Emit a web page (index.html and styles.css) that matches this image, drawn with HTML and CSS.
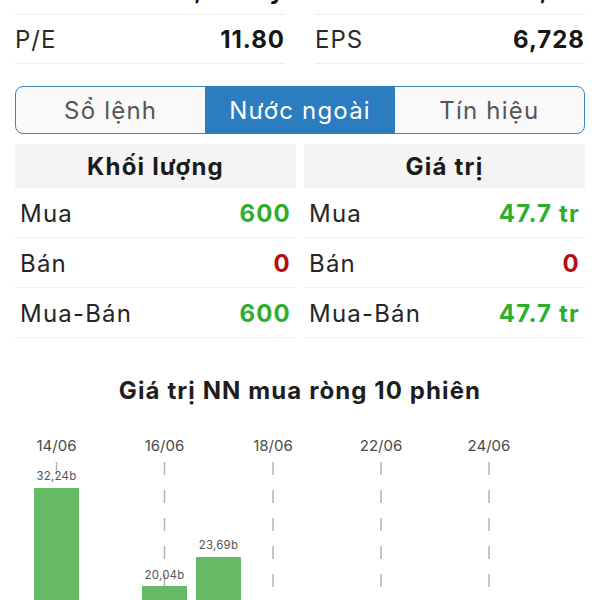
FILE: index.html
```html
<!DOCTYPE html>
<html lang="vi">
<head>
  <meta charset="UTF-8">
  <title>Nước ngoài</title>
  <link rel="stylesheet" href="styles.css">
</head>
<body>
  <div class="stats">
    <div class="stat"><span>Vốn hóa</span><span class="val">12,330 tỷ</span></div>
    <div class="stat"><span>KLCP</span><span class="val">7,1 tr</span></div>
    <div class="stat"><span>P/E</span><span class="val">11.80</span></div>
    <div class="stat"><span>EPS</span><span class="val">6,728</span></div>
  </div>

  <div class="tabs">
    <div class="tab">Sổ lệnh</div>
    <div class="tab active">Nước ngoài</div>
    <div class="tab">Tín hiệu</div>
  </div>

  <div class="foreign">
    <div class="col">
      <div class="head">Khối lượng</div>
      <div class="row"><span>Mua</span><span class="up">600</span></div>
      <div class="row"><span>Bán</span><span class="down">0</span></div>
      <div class="row"><span>Mua-Bán</span><span class="up">600</span></div>
    </div>
    <div class="col">
      <div class="head">Giá trị</div>
      <div class="row"><span>Mua</span><span class="up">47.7 tr</span></div>
      <div class="row"><span>Bán</span><span class="down">0</span></div>
      <div class="row"><span>Mua-Bán</span><span class="up">47.7 tr</span></div>
    </div>
  </div>

  <h2 class="chart-title">Giá trị NN mua ròng 10 phiên</h2>

  <svg class="chart" width="600" height="200" viewBox="0 0 600 200">
    <g class="grid">
      <line x1="56.5" y1="41" x2="56.5" y2="200"/>
      <line x1="164.5" y1="41" x2="164.5" y2="200"/>
      <line x1="273" y1="41" x2="273" y2="200"/>
      <line x1="381" y1="41" x2="381" y2="200"/>
      <line x1="489" y1="41" x2="489" y2="200"/>
    </g>
    <g class="dates">
      <text x="56.5" y="30">14/06</text>
      <text x="164.5" y="30">16/06</text>
      <text x="273" y="30">18/06</text>
      <text x="381" y="30">22/06</text>
      <text x="489" y="30">24/06</text>
    </g>
    <g class="bars">
      <rect x="34" y="67" width="45" height="140"/>
      <rect x="142" y="165" width="45" height="40"/>
      <rect x="196" y="136" width="45" height="70"/>
    </g>
    <g class="vals">
      <text x="56.5" y="59">32,24b</text>
      <text x="164.5" y="158">20,04b</text>
      <text x="218.5" y="128">23,69b</text>
    </g>
  </svg>
</body>
</html>
```

FILE: styles.css
```css
body {
  margin: 0;
  background: #ffffff;
  color: #1c1c1c;
  font-family: Inter, "Noto Sans", sans-serif;
  overflow: hidden;
}

.stats {
  display: grid;
  grid-template-columns: 1fr 1fr;
  column-gap: 30px;
  padding: 0 15px;
  margin-top: -34px;
}

.stat {
  display: flex;
  justify-content: space-between;
  align-items: center;
  height: 48px;
  border-bottom: 1px solid #ededed;
  font-size: 24px;
  letter-spacing: 1px;
  color: #2a2a2a;
}

.stat .val {
  font-weight: 700;
  color: #161616;
}

.tabs {
  display: flex;
  margin: 22px 15px 0;
  height: 46px;
  border: 1.5px solid #3a83c0;
  border-radius: 8px;
  overflow: hidden;
  background: #f9f9f9;
}

.tab {
  flex: 1;
  display: flex;
  align-items: center;
  justify-content: center;
  font-size: 24px;
  letter-spacing: 1.2px;
  color: #565656;
}

.tab.active {
  background: #2b7dbf;
  color: #ffffff;
}

.foreign {
  display: grid;
  grid-template-columns: 1fr 1fr;
  column-gap: 8px;
  margin: 10px 15px 0;
}

.head {
  height: 44px;
  display: flex;
  align-items: center;
  justify-content: center;
  background: #f4f4f4;
  font-size: 24px;
  letter-spacing: 1.2px;
  font-weight: 700;
  color: #1a1a1a;
}

.row {
  display: flex;
  justify-content: space-between;
  align-items: center;
  height: 47px;
  padding: 2px 5px 0;
  border-bottom: 1px solid #f0f0f0;
  font-size: 24px;
  letter-spacing: 1.2px;
  color: #262626;
}

.up {
  color: #2eae2e;
  font-weight: 700;
}

.down {
  color: #b40d0d;
  font-weight: 700;
}

.chart-title {
  margin: 39px 0 0;
  line-height: 28px;
  text-align: center;
  font-size: 24px;
  letter-spacing: 1.1px;
  font-weight: 700;
  color: #1e1e1e;
}

.chart {
  display: block;
  margin-top: 16px;
}

.grid line {
  stroke: #b4b4b4;
  stroke-width: 1.5;
  stroke-dasharray: 13 15;
}

.dates text {
  font-size: 15px;
  fill: #4a4a4a;
  text-anchor: middle;
}

.bars rect {
  fill: #66ba66;
}

.vals text {
  font-size: 11.5px;
  fill: #555555;
  text-anchor: middle;
  letter-spacing: 0.2px;
}
```
